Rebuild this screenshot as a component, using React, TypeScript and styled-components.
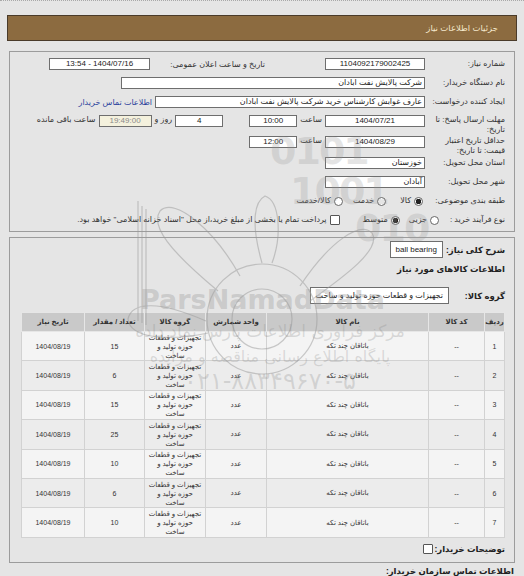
import styled, { createGlobalStyle } from 'styled-components';

const GlobalStyle = createGlobalStyle`
  body {
    margin: 0;
    background: #e5e5e5;
    font-family: "Liberation Sans", "DejaVu Sans", sans-serif;
    color: #222;
  }
`;

type Item = { row: number; qty: number };

const items: Item[] = [
  { row: 1, qty: 15 },
  { row: 2, qty: 6 },
  { row: 3, qty: 15 },
  { row: 4, qty: 25 },
  { row: 5, qty: 10 },
  { row: 6, qty: 6 },
  { row: 7, qty: 10 },
];

const App = () => {
  return (
    <Page dir="rtl">
      <GlobalStyle />
      <Header>جزئیات اطلاعات نیاز</Header>

      <Panel>
        <Row>
          <Label>شماره نیاز:</Label>
          <Field $w={100} $center>1104092179002425</Field>
          <Text $ml={3} $mr={60} $w={112}>تاریخ و ساعت اعلان عمومی:</Text>
          <Field $w={101} $center>1404/07/16 - 13:54</Field>
        </Row>
        <Row>
          <Label>نام دستگاه خریدار:</Label>
          <Field $w={304}>شرکت پالایش نفت ابادان</Field>
        </Row>
        <Row>
          <Label>ایجاد کننده درخواست:</Label>
          <Field $w={270}>عارف غوابش کارشناس خرید شرکت پالایش نفت ابادان</Field>
          <Link $mr={3}>اطلاعات تماس خریدار</Link>
        </Row>
        <Row $top>
          <Label $lines>
            مهلت ارسال پاسخ: تا
            <br />
            تاریخ:
          </Label>
          <Field $w={100} $center>1404/07/21</Field>
          <Text $ml={3} $mr={3}>ساعت</Text>
          <Field $w={48} $center>10:00</Field>
          <Field $w={48} $center $mr={26}>4</Field>
          <Text $ml={3} $mr={3}>روز و</Text>
          <Field $w={53} $center $muted>19:49:00</Field>
          <Text $mr={3}>ساعت باقی مانده</Text>
        </Row>
        <Row $top>
          <Label $lines>
            حداقل تاریخ اعتبار
            <br />
            قیمت: تا تاریخ:
          </Label>
          <Field $w={100} $center>1404/08/29</Field>
          <Text $ml={3} $mr={3}>ساعت</Text>
          <Field $w={48} $center>12:00</Field>
        </Row>
        <Row>
          <Label>استان محل تحویل:</Label>
          <Field $w={100}>خوزستان</Field>
        </Row>
        <Row>
          <Label>شهر محل تحویل:</Label>
          <Field $w={100}>آبادان</Field>
        </Row>
        <Row $low>
          <Label>طبقه بندی موضوعی:</Label>
          <Radio $checked $mr={2} />
          <Text $mr={3}>کالا</Text>
          <Radio $mr={14} />
          <Text $mr={3}>خدمت</Text>
          <Radio $mr={10} />
          <Text $mr={3}>کالا/خدمت</Text>
        </Row>
        <Row $low>
          <Label $w={66}>نوع فرآیند خرید :</Label>
          <Radio />
          <Text $mr={3}>جزیی</Text>
          <Radio $checked $mr={9} />
          <Text $mr={3}>متوسط</Text>
          <Check $mr={23} />
          <Text $mr={3}>
            پرداخت تمام یا بخشی از مبلغ خرید،از محل "اسناد خزانه اسلامی" خواهد بود.
          </Text>
        </Row>
      </Panel>

      <Panel $second>
        <Row>
          <BoldLabel>شرح کلی نیاز:</BoldLabel>
          <BigField $mr={3}>ball bearing</BigField>
        </Row>
        <SectionTitle>اطلاعات کالاهای مورد نیاز</SectionTitle>
        <Row>
          <BoldLabel $w={56}>گروه کالا:</BoldLabel>
          <BigField>تجهیزات و قطعات حوزه تولید و ساخت</BigField>
        </Row>

        <Table>
          <colgroup>
            <col style={{ width: 20 }} />
            <col style={{ width: 56 }} />
            <col style={{ width: 162 }} />
            <col style={{ width: 61 }} />
            <col style={{ width: 61 }} />
            <col style={{ width: 60 }} />
            <col style={{ width: 63 }} />
          </colgroup>
          <thead>
            <tr>
              <Th>ردیف</Th>
              <Th>کد کالا</Th>
              <Th>نام کالا</Th>
              <Th>واحد شمارش</Th>
              <Th>گروه کالا</Th>
              <Th>تعداد / مقدار</Th>
              <Th>تاریخ نیاز</Th>
            </tr>
          </thead>
          <tbody>
            {items.map((it) => (
              <Tr key={it.row}>
                <Td>{it.row}</Td>
                <Td>--</Td>
                <Td>باتاقان چند تکه</Td>
                <Td>عدد</Td>
                <GroupTd>
                  تجهیزات و قطعات
                  <br />
                  حوزه تولید و
                  <br />
                  ساخت
                </GroupTd>
                <Td>{it.qty}</Td>
                <Td>1404/08/19</Td>
              </Tr>
            ))}
          </tbody>
        </Table>

        <Row>
          <BoldLabel $w={72}>توضیحات خریدار:</BoldLabel>
          <Check />
        </Row>
      </Panel>

      <Footer>
        <BoldLabel as="div">اطلاعات تماس سازمان خریدار:</BoldLabel>
        <FooterLine>نام سازمان خریدار: شرکت پالایش نفت ابادان</FooterLine>
      </Footer>

      <Watermark aria-hidden>
        <svg width="524" height="576" viewBox="0 0 524 576">
          <g fill="none" stroke="#9a9a9a" strokeWidth="1.2" opacity="0.5">
            <circle cx="262" cy="318" r="30" />
            <circle cx="262" cy="318" r="55" />
            <path d="M218 290 C170 250 150 225 160 210 C175 195 215 230 240 275" />
            <path d="M300 285 C330 240 360 220 372 232 C382 248 345 275 310 300" />
            <path d="M206 320 C160 300 132 300 128 318 C130 338 170 340 208 332" />
            <path d="M262 262 C250 220 255 200 265 195 C280 200 282 235 272 262" />
            <path d="M138 320 L138 200 M142 322 L142 205 M146 324 L146 208" />
          </g>
        </svg>
        <Digits $x={270} $y={128}>0101</Digits>
        <Digits $x={290} $y={168}>1001</Digits>
        <Digits $x={355} $y={205}>010</Digits>
        <MarkBrand>ParsNamadData</MarkBrand>
        <MarkLine $y={320} $size={17}>مرکز فراوری اطلاعات پارس نماد داده</MarkLine>
        <MarkLine $y={346} $size={16}>پایگاه اطلاع رسانی مناقصه و مزایده</MarkLine>
        <MarkLine $y={366} $size={24}>۰۲۱-۸۸۳۴۹۶۷۰-۵</MarkLine>
      </Watermark>
    </Page>
  );
};

export default App;

const Page = styled.div`
  position: relative;
  width: 524px;
  height: 576px;
  overflow: hidden;
  box-sizing: border-box;
  padding: 14px 10px 0 12px;
  border-top: 1px dotted #a8a8a8;
  font-size: 8px;
`;

const Header = styled.div`
  height: 26px;
  margin: 0 -3px 0 -5px;
  box-sizing: border-box;
  background: #8c6b40;
  border: 1px solid #4a3b2a;
  color: #f4e8cc;
  font-size: 8.5px;
  line-height: 24px;
  padding-right: 18px;
`;

const Panel = styled.div<{ $second?: boolean }>`
  margin: ${({ $second }) => ($second ? '5px' : '10px')} -1px 0 -3px;
  border: 1px solid #9c9c9c;
  padding: ${({ $second }) => ($second ? '3px 9px 7px 11px' : '6px 9px 5px 9px')};
  display: flex;
  flex-direction: column;
  gap: ${({ $second }) => ($second ? '5px' : '7px')};
  position: relative;
  z-index: 0;
`;

const Row = styled.div<{ $top?: boolean; $low?: boolean }>`
  display: flex;
  align-items: ${({ $top }) => ($top ? 'flex-start' : 'center')};
  min-height: ${({ $low }) => ($low ? 10 : 12)}px;
  line-height: ${({ $low }) => ($low ? '10px' : 'normal')};
  margin-bottom: ${({ $top }) => ($top ? -6 : 0)}px;
`;

const Label = styled.div<{ $w?: number; $lines?: boolean }>`
  width: ${({ $w }) => $w ?? 80}px;
  flex-shrink: 0;
  white-space: nowrap;
  color: #333;
  line-height: ${({ $lines }) => ($lines ? '10px' : '12px')};
`;

const BoldLabel = styled.div<{ $w?: number }>`
  width: ${({ $w }) => ($w ? `${$w}px` : 'auto')};
  flex-shrink: 0;
  white-space: nowrap;
  font-weight: bold;
  font-size: 8.5px;
  color: #222;
`;

const SectionTitle = styled.div`
  font-weight: bold;
  font-size: 8.5px;
  color: #222;
  margin: 1px 0 8px;
`;

const Text = styled.span<{ $ml?: number; $mr?: number; $w?: number }>`
  white-space: nowrap;
  color: #333;
  ${({ $w }) => ($w ? `width: ${$w}px; flex-shrink: 0;` : '')}
  margin-left: ${({ $ml }) => $ml ?? 0}px;
  margin-right: ${({ $mr }) => $mr ?? 0}px;
`;

const Link = styled.span<{ $mr?: number }>`
  white-space: nowrap;
  color: #2b3f9c;
  margin-right: ${({ $mr }) => $mr ?? 0}px;
`;

const Field = styled.div<{ $w: number; $center?: boolean; $muted?: boolean; $mr?: number }>`
  width: ${({ $w }) => $w}px;
  height: 12px;
  flex-shrink: 0;
  box-sizing: border-box;
  border: 1px solid #6e6e6e;
  background: ${({ $muted }) => ($muted ? '#f4f1dd' : '#ffffff')};
  color: ${({ $muted }) => ($muted ? '#8a8a8a' : '#222')};
  text-align: ${({ $center }) => ($center ? 'center' : 'right')};
  line-height: 10px;
  padding: 0 2px;
  white-space: nowrap;
  overflow: hidden;
  margin-right: ${({ $mr }) => $mr ?? 0}px;
`;

const BigField = styled.div<{ $mr?: number }>`
  height: 17px;
  box-sizing: border-box;
  border: 1px solid #6e6e6e;
  background: #fff;
  padding: 0 5px;
  line-height: 15px;
  white-space: nowrap;
  margin-right: ${({ $mr }) => $mr ?? 0}px;
`;

const Radio = styled.span<{ $checked?: boolean; $mr?: number }>`
  width: 9px;
  height: 9px;
  flex-shrink: 0;
  box-sizing: border-box;
  border-radius: 50%;
  border: 1px solid #666;
  background: ${({ $checked }) =>
    $checked ? 'radial-gradient(circle, #222 0 2.6px, #fff 3px)' : '#fff'};
  margin-right: ${({ $mr }) => $mr ?? 0}px;
`;

const Check = styled.span<{ $mr?: number }>`
  width: 10px;
  height: 10px;
  flex-shrink: 0;
  box-sizing: border-box;
  border: 1px solid #555;
  border-radius: 1px;
  background: #fff;
  margin-right: ${({ $mr }) => $mr ?? 0}px;
`;

const Table = styled.table`
  width: 483px;
  margin-top: 3px;
  border-collapse: collapse;
  table-layout: fixed;
  font-size: 7px;
  color: #333;
`;

const Th = styled.th`
  height: 18px;
  padding: 0;
  background: #c9c9c9;
  border: 1px solid #e6e6e6;
  font-weight: bold;
  color: #333;
  text-align: center;
`;

const Tr = styled.tr`
  height: 29.4px;
  &:nth-child(odd) td {
    background: #f4f4f4;
  }
  &:nth-child(even) td {
    background: #ececec;
  }
`;

const Td = styled.td`
  padding: 0;
  border: 1px solid #d2d2d2;
  text-align: center;
`;

const GroupTd = styled(Td)`
  line-height: 9px;
`;

const Footer = styled.div`
  margin-top: 3px;
`;

const FooterLine = styled.div`
  margin-top: 3px;
  color: #333;
`;

const Watermark = styled.div`
  position: absolute;
  inset: 0;
  pointer-events: none;
  z-index: 1;
`;

const Digits = styled.div<{ $x: number; $y: number }>`
  position: absolute;
  left: ${({ $x }) => $x}px;
  top: ${({ $y }) => $y}px;
  font-family: "DejaVu Sans", sans-serif;
  font-weight: bold;
  font-size: 38px;
  letter-spacing: -2px;
  color: rgba(150, 150, 150, 0.25);
`;

const MarkBrand = styled.div`
  position: absolute;
  left: 140px;
  top: 283px;
  font-family: "DejaVu Sans", sans-serif;
  font-weight: bold;
  font-size: 27px;
  color: rgba(160, 160, 160, 0.4);
`;

const MarkLine = styled.div<{ $y: number; $size: number }>`
  position: absolute;
  left: 130px;
  width: 280px;
  top: ${({ $y }) => $y}px;
  text-align: center;
  font-family: "DejaVu Sans", sans-serif;
  font-size: ${({ $size }) => $size}px;
  color: rgba(140, 140, 140, 0.28);
  white-space: nowrap;
`;
